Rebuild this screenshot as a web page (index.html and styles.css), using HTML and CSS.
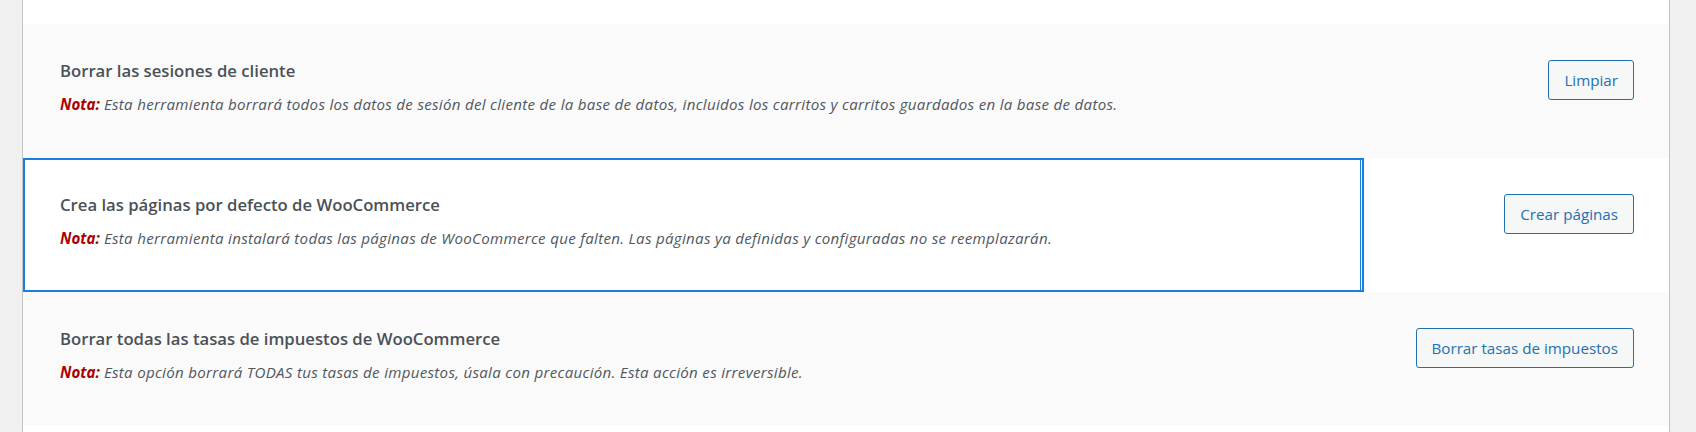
FILE: index.html
```html
<!DOCTYPE html>
<html lang="es">
<head>
    <meta charset="UTF-8">
    <meta name="viewport" content="width=device-width, initial-scale=1.0">
    <title>Estado - Herramientas</title>
    <link rel="stylesheet" href="styles.css">
</head>
<body>
    <div class="wrap">
        <table class="tools-table">
            <tbody>
                <tr class="tool-row spacer-row">
                    <th></th>
                    <td></td>
                </tr>
                <tr class="tool-row alt">
                    <th class="tool-info">
                        <strong class="tool-name">Borrar las sesiones de cliente</strong>
                        <p class="description"><strong class="note">Nota:</strong> Esta herramienta borrará todos los datos de sesión del cliente de la base de datos, incluidos los carritos y carritos guardados en la base de datos.</p>
                    </th>
                    <td class="tool-action">
                        <a href="#" class="button">Limpiar</a>
                    </td>
                </tr>
                <tr class="tool-row">
                    <th class="tool-info is-focused" tabindex="0">
                        <strong class="tool-name">Crea las páginas por defecto de WooCommerce</strong>
                        <p class="description"><strong class="note">Nota:</strong> Esta herramienta instalará todas las páginas de WooCommerce que falten. Las páginas ya definidas y configuradas no se reemplazarán.</p>
                    </th>
                    <td class="tool-action">
                        <a href="#" class="button">Crear páginas</a>
                    </td>
                </tr>
                <tr class="tool-row alt">
                    <th class="tool-info">
                        <strong class="tool-name">Borrar todas las tasas de impuestos de WooCommerce</strong>
                        <p class="description"><strong class="note">Nota:</strong> Esta opción borrará TODAS tus tasas de impuestos, úsala con precaución. Esta acción es irreversible.</p>
                    </th>
                    <td class="tool-action">
                        <a href="#" class="button">Borrar tasas de impuestos</a>
                    </td>
                </tr>
                <tr class="tool-row spacer-row">
                    <th></th>
                    <td></td>
                </tr>
            </tbody>
        </table>
    </div>
</body>
</html>
```

FILE: styles.css
```css
body {
    margin: 0;
    background: #f0f0f1;
    font-family: "Open Sans", "Noto Sans", sans-serif;
    color: #3c434a;
    overflow: hidden;
}

.wrap {
    padding: 0 26px 0 22px;
}

.tools-table {
    width: 100%;
    border-collapse: collapse;
    background: #fff;
    border-left: 1px solid #c3c4c7;
    border-right: 1px solid #c3c4c7;
}

.tool-row.alt {
    background: #fafafa;
}

.spacer-row th,
.spacer-row td {
    height: 24px;
    padding: 0;
}

.tool-info {
    text-align: left;
    font-weight: normal;
    vertical-align: top;
    padding: 36px 20px 44px 37px;
}

.tool-info.is-focused {
    outline: none;
    box-shadow: inset 0 0 0 2px #1a7de0, inset -3px 0 0 0 #fff, inset -4px 0 0 0 #1a7de0;
}

.tool-name {
    display: block;
    font-size: 16.7px;
    font-weight: 600;
    line-height: 22px;
    color: #4b5157;
}

.description {
    margin: 12px 0 0;
    font-size: 15.1px;
    letter-spacing: 0.3px;
    line-height: 20px;
    font-style: italic;
    color: #50575e;
}

.note {
    color: #a00;
    font-weight: 700;
    letter-spacing: 0;
}

.tool-action {
    width: 270px;
    vertical-align: top;
    text-align: right;
    padding: 36px 35px 0 0;
}

.button {
    display: inline-block;
    box-sizing: border-box;
    height: 40px;
    padding: 0 15px;
    line-height: 38px;
    font-size: 15.2px;
    color: #2271b1;
    text-decoration: none;
    background: #f6f7f7;
    border: 1px solid #2271b1;
    border-radius: 3px;
    white-space: nowrap;
}
```
